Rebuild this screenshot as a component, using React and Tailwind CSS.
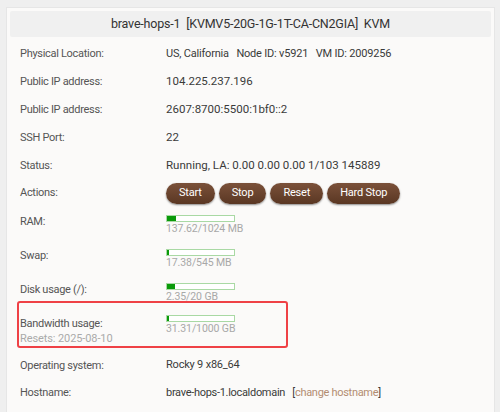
import React from 'react';

const rows = [
  { label: 'Physical Location:', value: 'US, California\u00a0\u00a0\u00a0Node ID: v5921\u00a0\u00a0\u00a0VM ID: 2009256', tight: true },
  { label: 'Public IP address:', value: '104.225.237.196' },
  { label: 'Public IP address:', value: '2607:8700:5500:1bf0::2' },
  { label: 'SSH Port:', value: '22' },
  { label: 'Status:', value: 'Running, LA: 0.00 0.00 0.00 1/103 145889' },
];

const Label = ({ children }) => (
  <div className="w-[146px] shrink-0 text-[#555] text-[11px] tracking-[-0.3px] leading-[14px]">{children}</div>
);

const Bar = ({ used, total, unit }) => (
  <div>
    <div className="h-[7px] w-[69px] border border-[#a9d9a4] bg-white">
      <div className="h-full bg-[#0a9a0a]" style={{ width: `${Math.max(3, (used / total) * 100)}%` }} />
    </div>
    <div className="text-[#a8a8a8] text-[10.5px] tracking-[-0.1px] leading-[14px]">{used}/{total} {unit}</div>
  </div>
);

const Btn = ({ children }) => (
  <button className="h-[21px] px-[13px] rounded-full bg-linear-to-b from-[#7b513a] to-[#5a3723] text-white text-[11px] tracking-[-0.2px] shadow-[0_1px_2px_rgba(0,0,0,0.45)]">
    {children}
  </button>
);

export default function App() {
  return (
    <div className="h-[412px] overflow-hidden bg-[#efefef] pt-[7px] px-[6px]" style={{ fontFamily: 'Roboto, sans-serif' }}>
      <div className="w-[489px] h-[420px] bg-[#fbfaf9] border border-[#e6e6e6] px-[3px] pt-[3px] text-[11.5px] text-[#3a3a3a]">
        <div className="h-[26px] bg-[#f0f0f0] rounded-[2px] flex items-center justify-center text-[12.5px] tracking-[-0.2px] text-[#333]">
          brave-hops-1&nbsp;&nbsp;[KVMV5-20G-1G-1T-CA-CN2GIA]&nbsp;&nbsp;KVM
        </div>
        <div className="px-[10px] pt-[3px]">
          {rows.map((r, i) => (
            <div key={i} className="flex h-[28px] items-center">
              <Label>{r.label}</Label>
              <div className={r.tight ? 'text-[11px] tracking-[-0.2px]' : ''}>{r.value}</div>
            </div>
          ))}
          <div className="flex h-[26px] items-center">
            <Label>Actions:</Label>
            <div className="flex gap-[4px]">
              <Btn>Start</Btn>
              <Btn>Stop</Btn>
              <Btn>Reset</Btn>
              <Btn>Hard Stop</Btn>
            </div>
          </div>
          <div className="flex h-[34px] items-start pt-[9px]">
            <Label>RAM:</Label>
            <Bar used="137.62" total={1024} unit="MB" />
          </div>
          <div className="flex h-[34px] items-start pt-[9px]">
            <Label>Swap:</Label>
            <Bar used="17.38" total={545} unit="MB" />
          </div>
          <div className="flex h-[27px] items-start pt-[9px]">
            <Label>Disk usage (/):</Label>
            <Bar used="2.35" total={20} unit="GB" />
          </div>
          <div className="-mx-[3px] w-[271px] h-[47px] border-2 border-[#ef4146] rounded-[3px] flex items-start pt-[12px] px-[1px]">
            <div className="w-[146px] pt-[2px]">
              <Label>Bandwidth usage:</Label>
              <div className="text-[#aaa] text-[11px] tracking-[-0.1px] leading-[15px]">Resets: 2025-08-10</div>
            </div>
            <Bar used="31.31" total={1000} unit="GB" />
          </div>
          <div className="flex h-[35px] items-center">
            <Label>Operating system:</Label>
            <div className="text-[11px] tracking-[-0.2px]">Rocky 9 x86_64</div>
          </div>
          <div className="flex h-[20px] items-center">
            <Label>Hostname:</Label>
            <div className="text-[11px] tracking-[-0.3px]">
              brave-hops-1.localdomain&nbsp;&nbsp;&nbsp;[<span className="text-[#b38d72]">change hostname</span>]
            </div>
          </div>
        </div>
      </div>
    </div>
  );
}
